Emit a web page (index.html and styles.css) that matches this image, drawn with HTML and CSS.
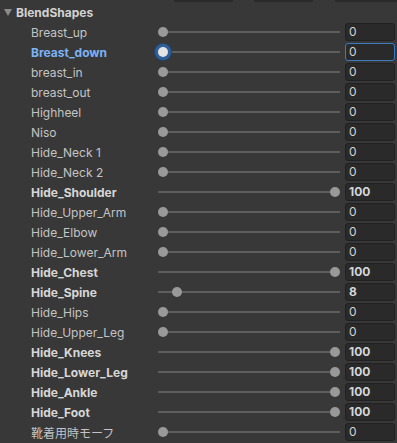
FILE: index.html
```html
<!DOCTYPE html>
<html lang="ja">
<head>
    <meta charset="UTF-8">
    <title>BlendShapes</title>
    <link rel="stylesheet" href="styles.css">
</head>
<body>
    <div class="toolbar">
        <span class="tool-btn b1"></span>
        <span class="tool-btn b2"></span>
        <span class="tool-btn b3"></span>
    </div>

    <div class="foldout">
        <span class="arrow"></span>
        <span class="foldout-title">BlendShapes</span>
    </div>

    <div class="shapes">
        <div class="row"><span class="label">Breast_up</span><div class="slider"><i class="thumb" style="--v:0"></i></div><span class="field">0</span></div>
        <div class="row focused"><span class="label">Breast_down</span><div class="slider"><i class="thumb" style="--v:0"></i></div><span class="field">0</span></div>
        <div class="row"><span class="label">breast_in</span><div class="slider"><i class="thumb" style="--v:0"></i></div><span class="field">0</span></div>
        <div class="row"><span class="label">breast_out</span><div class="slider"><i class="thumb" style="--v:0"></i></div><span class="field">0</span></div>
        <div class="row"><span class="label">Highheel</span><div class="slider"><i class="thumb" style="--v:0"></i></div><span class="field">0</span></div>
        <div class="row"><span class="label">Niso</span><div class="slider"><i class="thumb" style="--v:0"></i></div><span class="field">0</span></div>
        <div class="row"><span class="label">Hide_Neck 1</span><div class="slider"><i class="thumb" style="--v:0"></i></div><span class="field">0</span></div>
        <div class="row"><span class="label">Hide_Neck 2</span><div class="slider"><i class="thumb" style="--v:0"></i></div><span class="field">0</span></div>
        <div class="row changed"><span class="label">Hide_Shoulder</span><div class="slider"><i class="thumb" style="--v:100"></i></div><span class="field">100</span></div>
        <div class="row"><span class="label">Hide_Upper_Arm</span><div class="slider"><i class="thumb" style="--v:0"></i></div><span class="field">0</span></div>
        <div class="row"><span class="label">Hide_Elbow</span><div class="slider"><i class="thumb" style="--v:0"></i></div><span class="field">0</span></div>
        <div class="row"><span class="label">Hide_Lower_Arm</span><div class="slider"><i class="thumb" style="--v:0"></i></div><span class="field">0</span></div>
        <div class="row changed"><span class="label">Hide_Chest</span><div class="slider"><i class="thumb" style="--v:100"></i></div><span class="field">100</span></div>
        <div class="row changed"><span class="label">Hide_Spine</span><div class="slider"><i class="thumb" style="--v:8"></i></div><span class="field">8</span></div>
        <div class="row"><span class="label">Hide_Hips</span><div class="slider"><i class="thumb" style="--v:0"></i></div><span class="field">0</span></div>
        <div class="row"><span class="label">Hide_Upper_Leg</span><div class="slider"><i class="thumb" style="--v:0"></i></div><span class="field">0</span></div>
        <div class="row changed"><span class="label">Hide_Knees</span><div class="slider"><i class="thumb" style="--v:100"></i></div><span class="field">100</span></div>
        <div class="row changed"><span class="label">Hide_Lower_Leg</span><div class="slider"><i class="thumb" style="--v:100"></i></div><span class="field">100</span></div>
        <div class="row changed"><span class="label">Hide_Ankle</span><div class="slider"><i class="thumb" style="--v:100"></i></div><span class="field">100</span></div>
        <div class="row changed"><span class="label">Hide_Foot</span><div class="slider"><i class="thumb" style="--v:100"></i></div><span class="field">100</span></div>
        <div class="row"><span class="label">靴着用時モーフ</span><div class="slider"><i class="thumb" style="--v:0"></i></div><span class="field">0</span></div>
    </div>
</body>
</html>
```

FILE: styles.css
```css
body {
    margin: 0;
    background-color: #383838;
    font-family: Inter, "Noto Sans CJK JP", sans-serif;
    font-size: 12px;
    color: #c4c4c4;
    overflow: hidden;
}

.toolbar {
    height: 2px;
    position: relative;
}

.tool-btn {
    position: absolute;
    top: 0;
    height: 2px;
    background-color: #2a2a2a;
}

.b1 { left: 174px; width: 59px; }
.b2 { left: 254px; width: 59px; }
.b3 { left: 335px; width: 62px; }

.foldout {
    height: 20px;
    display: flex;
    align-items: center;
    padding-top: 1px;
    box-sizing: border-box;
}

.arrow {
    width: 0;
    height: 0;
    margin-left: 4px;
    margin-right: 4px;
    border-left: 4px solid transparent;
    border-right: 4px solid transparent;
    border-top: 7px solid #8c8c8c;
}

.foldout-title {
    font-weight: bold;
    color: #d2d2d2;
}

.row {
    height: 20px;
    display: grid;
    grid-template-columns: 153px 1fr 50px;
    column-gap: 5px;
    padding-right: 2px;
    align-items: center;
}

.label {
    padding-left: 31px;
    white-space: nowrap;
}

.slider {
    position: relative;
    height: 2px;
    background-color: #5e5e5e;
}

.thumb {
    position: absolute;
    top: -4px;
    left: calc((100% - 10px) * var(--v) / 100);
    width: 10px;
    height: 10px;
    border-radius: 50%;
    background-color: #999999;
}

.field {
    height: 18px;
    line-height: 16px;
    box-sizing: border-box;
    padding-left: 3px;
    background-color: #2a2a2a;
    border: 1px solid #212121;
    border-radius: 3px;
    color: #d2d2d2;
}

.changed .label,
.changed .field {
    font-weight: bold;
    color: #d6d6d6;
}

.focused .label {
    font-weight: bold;
    color: #7bb3f3;
}

.focused .thumb {
    background-color: #e4e4e4;
    box-shadow: 0 0 0 3px #2f6099, 0 0 0 4px #24466e;
}

.focused .field {
    border-color: #3b7bc0;
}
```
